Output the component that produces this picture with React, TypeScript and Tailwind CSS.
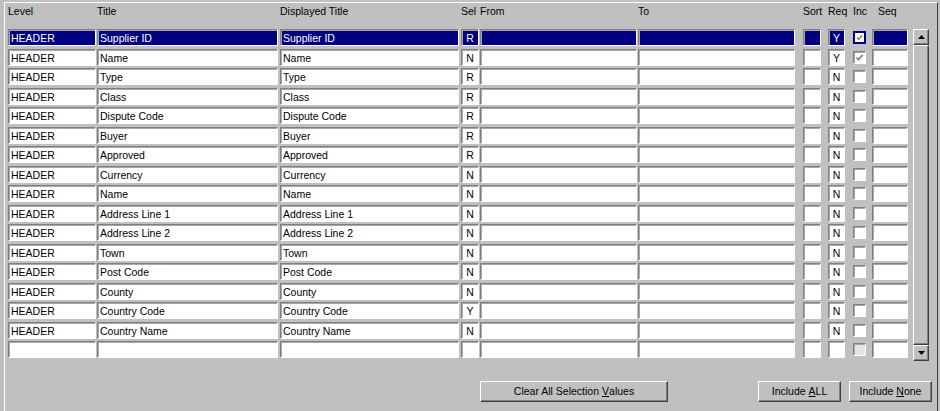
import React from "react";

type Row = { title: string; sel: string; req: string; inc: boolean };

const rows: Row[] = [
  { title: "Supplier ID", sel: "R", req: "Y", inc: true },
  { title: "Name", sel: "N", req: "Y", inc: true },
  { title: "Type", sel: "R", req: "N", inc: false },
  { title: "Class", sel: "R", req: "N", inc: false },
  { title: "Dispute Code", sel: "R", req: "N", inc: false },
  { title: "Buyer", sel: "R", req: "N", inc: false },
  { title: "Approved", sel: "R", req: "N", inc: false },
  { title: "Currency", sel: "N", req: "N", inc: false },
  { title: "Name", sel: "N", req: "N", inc: false },
  { title: "Address Line 1", sel: "N", req: "N", inc: false },
  { title: "Address Line 2", sel: "N", req: "N", inc: false },
  { title: "Town", sel: "N", req: "N", inc: false },
  { title: "Post Code", sel: "N", req: "N", inc: false },
  { title: "County", sel: "N", req: "N", inc: false },
  { title: "Country Code", sel: "Y", req: "N", inc: false },
  { title: "Country Name", sel: "N", req: "N", inc: false },
];

const col = {
  level: "w-[88px]",
  title: "ml-[1px] w-[181px]",
  disp: "ml-[2px] w-[179px]",
  sel: "ml-[2px] w-[18px]",
  from: "ml-[1px] w-[157px]",
  to: "ml-[1px] w-[157px]",
  sort: "ml-[8px] w-[18px]",
  req: "ml-[7px] w-[17px]",
  inc: "ml-[8px] w-[13px]",
  seq: "ml-[6px] w-[36px]",
};

const sunken =
  "border border-t-[#808080] border-l-[#808080] border-b-white border-r-white shadow-[inset_1px_1px_0_#a8a8a8]";
const raised =
  "border border-t-white border-l-white border-b-[#404040] border-r-[#404040] shadow-[inset_-1px_-1px_0_#808080]";

function Field({
  cls,
  active,
  center,
  tone,
  children,
}: {
  cls: string;
  active?: boolean;
  center?: boolean;
  tone?: string;
  children?: React.ReactNode;
}) {
  return (
    <div
      className={`${cls} h-[17px] ${sunken} flex items-center pt-[2px] overflow-hidden whitespace-nowrap leading-none ${
        center ? "justify-center" : "pl-[2px]"
      } ${active ? "bg-[#000080] text-white" : "bg-white text-black"} ${tone ?? ""}`}
    >
      {children}
    </div>
  );
}

function Check({ on, active, disabled }: { on: boolean; active?: boolean; disabled?: boolean }) {
  return (
    <div className={`${col.inc} h-[17px] flex items-center`}>
      <div
        className={`w-[13px] h-[13px] ${
          active ? "border-2 border-[#000080]" : sunken
        } ${disabled ? "bg-[#e4e4e4]" : "bg-white"}`}
      >
        {on && (
          <svg viewBox="0 0 11 11" className="w-full h-full">
            <path d="M2.5 5.5 L4.5 7.8 L8.8 2.8" fill="none" stroke="#7a7a7a" strokeWidth="1.6" />
          </svg>
        )}
      </div>
    </div>
  );
}

function Arrow({ up }: { up?: boolean }) {
  return (
    <div className={`h-[16px] w-full bg-[#c0c0c0] ${raised} flex items-center justify-center`}>
      <svg width="7" height="4" viewBox="0 0 7 4">
        <path d={up ? "M0 4 L3.5 0 L7 4 Z" : "M0 0 L7 0 L3.5 4 Z"} fill="#000" />
      </svg>
    </div>
  );
}

function Button({ cls, children }: { cls: string; children: React.ReactNode }) {
  return (
    <div className={`${cls} h-[21px] bg-[#c0c0c0] ${raised} flex items-center justify-center text-black`}>
      {children}
    </div>
  );
}

export default function App() {
  const headers: [string, string][] = [
    ["Level", col.level],
    ["Title", col.title],
    ["Displayed Title", col.disp],
    ["Sel", col.sel],
    ["From", col.from],
    ["To", col.to],
    ["Sort", col.sort],
    ["Req", col.req],
    ["Inc", col.inc],
    ["Seq", col.seq],
  ];

  return (
    <div className="w-[940px] h-[411px] bg-[#c0c0c0] overflow-hidden font-['Liberation_Sans',Arial,sans-serif] text-[10.5px] text-black">
      <div className="ml-[4px] mt-[2px] w-[934px] h-[420px] border border-t-white border-l-white border-r-[#404040] border-b-[#404040] pl-[3px]">
        {/* column headings */}
        <div className="flex h-[26px] pt-[1px]">
          {headers.map(([label, cls]) => (
            <div key={label} className={`${cls} whitespace-nowrap ${label === "Seq" ? "pl-[6px]" : ""}`}>
              {label}
            </div>
          ))}
        </div>

        <div className="flex">
          <div className="flex flex-col gap-[2.5px]">
            {rows.map((r, i) => {
              const a = i === 0;
              return (
                <div key={i} className="flex">
                  <Field cls={col.level} active={a}>HEADER</Field>
                  <Field cls={col.title} active={a}>{r.title}</Field>
                  <Field cls={col.disp} active={a}>{r.title}</Field>
                  <Field cls={col.sel} active={a} center>{r.sel}</Field>
                  <Field cls={col.from} active={a} />
                  <Field cls={col.to} active={a} />
                  <Field cls={col.sort} active={a} />
                  <Field
                    cls={col.req}
                    active={a}
                    center
                    tone={r.req === "Y" ? (a ? "text-[#9fb4ff]" : "text-[#6a6a9a]") : ""}
                  >
                    {r.req}
                  </Field>
                  <Check on={r.inc} active={a} />
                  <Field cls={col.seq} active={a} />
                </div>
              );
            })}
            {/* empty entry row */}
            <div className="flex">
              <Field cls={col.level} />
              <Field cls={col.title} />
              <Field cls={col.disp} />
              <Field cls={col.sel} />
              <Field cls={col.from} />
              <Field cls={col.to} />
              <Field cls={col.sort} />
              <Field cls={col.req} />
              <Check on={false} disabled />
              <Field cls={col.seq} />
            </div>
          </div>

          {/* scrollbar */}
          <div className="ml-[5px] w-[16px] flex flex-col mb-[-3px]">
            <Arrow up />
            <div className={`flex-1 bg-[#c0c0c0] ${raised}`} />
            <Arrow />
          </div>
        </div>

        {/* actions */}
        <div className="flex mt-[23px]">
          <Button cls="ml-[472px] w-[188px]">
            Clear All Selection <span className="underline ml-[3px]">V</span>alues
          </Button>
          <Button cls="ml-[90px] w-[83px]">
            Include&nbsp;<span className="underline">A</span>LL
          </Button>
          <Button cls="ml-[8px] w-[83px]">
            Include&nbsp;<span className="underline">N</span>one
          </Button>
        </div>
      </div>
    </div>
  );
}
